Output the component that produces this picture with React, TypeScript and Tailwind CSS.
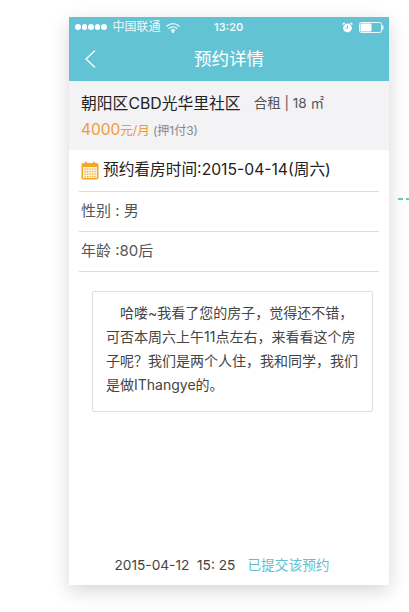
import React from "react";

function Wifi() {
  return (
    <svg width="14" height="11" viewBox="0 0 14 11" fill="none" stroke="#fff" strokeWidth="1.4" strokeLinecap="round" opacity="0.9">
      <path d="M1 4 C4.5 0.8 9.5 0.8 13 4" />
      <path d="M3.2 6.2 C5.3 4.4 8.7 4.4 10.8 6.2" />
      <path d="M5.4 8.4 C6.3 7.7 7.7 7.7 8.6 8.4" />
      <circle cx="7" cy="9.8" r="0.5" fill="#fff" />
    </svg>
  );
}

function Alarm() {
  return (
    <svg width="11" height="11" viewBox="0 0 11 11">
      <circle cx="5.5" cy="6" r="4.4" fill="#fff" />
      <path d="M5.5 3.5 V6.2 H3.8" fill="none" stroke="#62c3d5" strokeWidth="1" />
      <path d="M0.6 2.6 L2.6 0.8 M10.4 2.6 L8.4 0.8" stroke="#fff" strokeWidth="1.3" />
    </svg>
  );
}

function Battery() {
  return (
    <svg width="25" height="11" viewBox="0 0 25 11">
      <rect x="0.5" y="0.5" width="22" height="10" rx="1.8" fill="none" stroke="#fff" strokeOpacity="0.9" />
      <rect x="1.5" y="1.5" width="11" height="8" rx="1" fill="#fff" />
      <rect x="23" y="3.5" width="1.5" height="4" fill="#fff" fillOpacity="0.9" />
    </svg>
  );
}

function Calendar() {
  return (
    <svg width="18" height="19" viewBox="0 0 18 19">
      <rect x="0.5" y="2" width="17" height="16.5" rx="2" fill="#f6a623" />
      <rect x="2" y="6" width="14" height="11" fill="#fdf0d8" />
      <rect x="4" y="0.5" width="2" height="3.5" rx="1" fill="#f6a623" />
      <rect x="12" y="0.5" width="2" height="3.5" rx="1" fill="#f6a623" />
      <g fill="#f3b04a">
        {[7.5, 10, 12.5, 15].map((y) =>
          [3.5, 6, 8.5, 11, 13.5].map((x) => <rect key={`${x}-${y}`} x={x} y={y} width="1.3" height="1.3" />)
        )}
      </g>
    </svg>
  );
}

export default function App() {
  return (
    <div className="w-[409px] h-[612px] overflow-hidden bg-white flex items-start pt-[17px] pl-[69px] font-['Inter','Noto_Sans_CJK_SC',sans-serif] font-normal">
      <div className="w-[320px] h-[568px] shrink-0 flex flex-col bg-white shadow-[0_6px_18px_rgba(0,0,0,0.16)]">
        <div className="h-[64px] bg-[#62c3d5] flex flex-col text-white">
          <div className="h-[20px] flex items-center pl-[6px] pr-[5px] relative">
            <div className="flex items-center gap-[1px]">
              {[0, 1, 2, 3, 4].map((i) => (
                <span key={i} className="w-[5.5px] h-[5.5px] rounded-full bg-white" />
              ))}
            </div>
            <span className="ml-[6px] text-[12px] leading-none opacity-90">中国联通</span>
            <span className="ml-[5px] flex"><Wifi /></span>
            <span className="absolute left-[145px] text-[11px] font-semibold leading-none opacity-90">13:20</span>
            <span className="ml-auto flex items-center gap-[6px]">
              <Alarm />
              <Battery />
            </span>
          </div>
          <div className="flex-1 flex items-center relative">
            <svg className="ml-[15px]" width="12" height="20" viewBox="0 0 12 20" fill="none" stroke="#fff" strokeWidth="1.3">
              <path d="M11 1.5 L2 10 L11 18.5" />
            </svg>
            <span className="absolute left-0 right-0 text-center text-[17.5px] leading-none">预约详情</span>
          </div>
        </div>

        <div className="h-[69px] bg-[#f3f2f5] pl-[12px] flex flex-col">
          <div className="mt-[11px] h-[24px] flex items-center text-[#222]">
            <span className="text-[15.8px] leading-none">朝阳区CBD光华里社区</span>
            <span className="ml-[13px] text-[13.5px] leading-none text-[#555]">合租 | 18 ㎡</span>
          </div>
          <div className="mt-[6px] h-[22px] flex items-baseline text-[#ef9a32]">
            <span className="text-[15.5px] leading-none">4000</span>
            <span className="text-[12.5px] leading-none">元/月</span>
            <span className="ml-[3px] text-[12px] leading-none text-[#888]">(押1付3)</span>
          </div>
        </div>

        <div className="px-[10px]">
          <div className="h-[42px] flex items-center pl-[2px] pb-[1px] border-b border-[#dcdcdc] text-[15.7px] text-[#222]">
            <Calendar />
            <span className="ml-[4px] leading-none">预约看房时间:2015-04-14(周六)</span>
          </div>
          <div className="h-[40px] flex items-center pl-[2px] border-b border-[#dcdcdc] text-[15px] text-[#555]">性别 : 男</div>
          <div className="h-[40px] flex items-center pl-[2px] border-b border-[#dcdcdc] text-[15px] text-[#555]">年龄 :80后</div>
        </div>

        <div className="mt-[19px] ml-[23px] w-[281px] h-[121px] border border-[#dddcdf] rounded-[2px] pt-[9px] pl-[13px] pr-[11px] text-[14px] leading-[24px] text-[#444] indent-[14px]">
          哈喽~我看了您的房子，觉得还不错，可否本周六上午11点左右，来看看这个房子呢？我们是两个人住，我和同学，我们是做IThangye的。
        </div>

        <div className="mt-auto mb-[10px] flex justify-center pr-[14px] items-center text-[13.7px] leading-[20px]">
          <span className="text-[#444] whitespace-pre">2015-04-12  15: 25</span>
          <span className="ml-[12px] text-[#62bdd0]">已提交该预约</span>
        </div>
      </div>
      <div className="ml-[9px] mt-[181px] flex gap-[3px] shrink-0">
        <span className="w-[5px] h-[1.5px] bg-[#6cc9ad]" />
        <span className="w-[4px] h-[1.5px] bg-[#6cc9ad]" />
      </div>
    </div>
  );
}
